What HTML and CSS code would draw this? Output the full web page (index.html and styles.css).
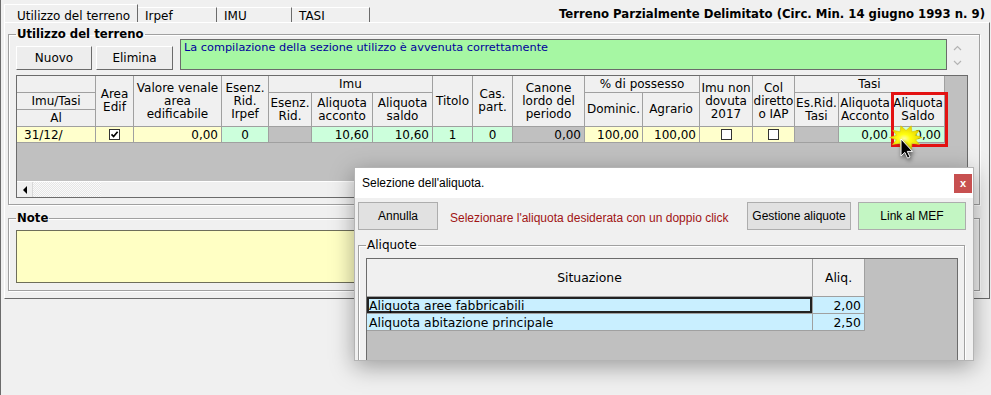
FILE: index.html
```html
<!DOCTYPE html>
<html lang="it">
<head>
    <meta charset="UTF-8">
    <meta name="viewport" content="width=device-width, initial-scale=1.0">
    <title>Terreno Parzialmente Delimitato</title>
    <link rel="stylesheet" href="styles.css">
</head>
<body>

    <div class="app">
        <!-- Tabs + title -->
        <div class="topbar">
            <div class="tabs">
                <div class="tab active">Utilizzo del terreno</div>
                <div class="tab tab-irpef">Irpef</div>
                <div class="tab tab-imu">IMU</div>
                <div class="tab tab-tasi">TASI</div>
            </div>
            <div class="page-title">Terreno Parzialmente Delimitato (Circ. Min. 14 giugno 1993 n. 9)</div>
        </div>

        <div class="panel">
            <fieldset class="group group-usage">
                <legend>Utilizzo del terreno</legend>
                <div class="toolbar">
                    <button type="button" class="btn btn-new">Nuovo</button>
                    <button type="button" class="btn btn-del">Elimina</button>
                    <div class="message">La compilazione della sezione utilizzo è avvenuta correttamente</div>
                    <div class="msg-scroll">
                        <svg width="9" height="6" viewBox="0 0 9 6"><path d="M1 5 L4.5 1.5 L8 5" fill="none" stroke="#b4b4b4" stroke-width="1.2"/></svg>
                        <svg width="9" height="6" viewBox="0 0 9 6"><path d="M1 1 L4.5 4.5 L8 1" fill="none" stroke="#b4b4b4" stroke-width="1.2"/></svg>
                    </div>
                </div>

                <!-- Grid -->
                <div class="grid-wrap">
                    <div class="grid-body">
                        <div class="grid">
                            <div class="h"></div>
                            <div class="h r3">Area<br>Edif</div>
                            <div class="h r3">Valore venale<br>area<br>edificabile</div>
                            <div class="h r3">Esenz.<br>Rid.<br>Irpef</div>
                            <div class="h c3">Imu</div>
                            <div class="h r3">Titolo</div>
                            <div class="h r3">Cas.<br>part.</div>
                            <div class="h r3">Canone<br>lordo del<br>periodo</div>
                            <div class="h c2">% di possesso</div>
                            <div class="h r3">Imu non<br>dovuta<br>2017</div>
                            <div class="h r3">Col<br>diretto<br>o IAP</div>
                            <div class="h c3">Tasi</div>

                            <div class="h">Imu/Tasi</div>
                            <div class="h r2">Esenz.<br>Rid.</div>
                            <div class="h r2">Aliquota<br>acconto</div>
                            <div class="h r2">Aliquota<br>saldo</div>
                            <div class="h r2">Dominic.</div>
                            <div class="h r2">Agrario</div>
                            <div class="h r2">Es.Rid.<br>Tasi</div>
                            <div class="h r2">Aliquota<br>Acconto</div>
                            <div class="h r2">Aliquota<br>Saldo</div>

                            <div class="h">Al</div>

                            <div class="d y txt">31/12/</div>
                            <div class="d y ctr"><span class="chk"><svg width="9" height="9" viewBox="0 0 9 9"><path d="M1.5 4.3 L3.6 6.5 L7.6 1.8" fill="none" stroke="#000" stroke-width="1.7"/></svg></span></div>
                            <div class="d y num">0,00</div>
                            <div class="d g ctr">0</div>
                            <div class="d k"></div>
                            <div class="d g num">10,60</div>
                            <div class="d g num">10,60</div>
                            <div class="d g ctr">1</div>
                            <div class="d g ctr">0</div>
                            <div class="d k num">0,00</div>
                            <div class="d y num">100,00</div>
                            <div class="d y num">100,00</div>
                            <div class="d y ctr"><span class="chk"></span></div>
                            <div class="d y ctr"><span class="chk"></span></div>
                            <div class="d k"></div>
                            <div class="d g num">0,00</div>
                            <div class="d g num">0,00</div>
                        </div>
                    </div>
                    <div class="hscroll">
                        <div class="hs-arrow"><span class="tri-left"></span></div>
                        <div class="hs-thumb"></div>
                    </div>
                </div>
            </fieldset>

            <fieldset class="group group-note">
                <legend>Note</legend>
                <div class="note-box"></div>
            </fieldset>
        </div>
    </div>

    <!-- Highlight + pointer -->
    <div class="highlight"></div>
    <svg class="pointer" width="40" height="40" viewBox="0 0 40 40">
        <defs>
            <radialGradient id="burst" cx="45%" cy="55%" r="55%">
                <stop offset="0" stop-color="#ffffb0"/>
                <stop offset="0.35" stop-color="#ffff10"/>
                <stop offset="1" stop-color="#e4d000"/>
            </radialGradient>
        </defs>
        <polygon fill="url(#burst)" stroke="#d8c400" stroke-width="0.6" points="34,13.5 27.5,15.7 31.5,20.5 23.9,19.2 23.5,25.5 18,20.5 12.5,25.5 12.1,19.2 4.5,20.5 8.5,15.7 1.5,13.5 8.5,11.3 4.8,6.2 12.1,7.8 12.8,1.8 18,6.5 23.2,1.8 23.9,7.8 31.2,6.2 27.5,11.3"/>
        <path class="arrow" d="M13 15 V32 L16.8 28.4 L19.6 34.2 L22 33 L19.3 27.4 H24.5 Z" fill="#000" stroke="#fff" stroke-width="1"/>
    </svg>

    <!-- Dialog -->
    <div class="dialog">
        <div class="dlg-title">
            <span>Selezione dell'aliquota.</span>
            <span class="dlg-close">x</span>
        </div>
        <div class="dlg-body">
            <div class="dlg-actions">
                <button type="button" class="dbtn btn-cancel">Annulla</button>
                <span class="dlg-hint">Selezionare l'aliquota desiderata con un doppio click</span>
                <button type="button" class="dbtn btn-manage">Gestione aliquote</button>
                <button type="button" class="dbtn btn-mef">Link al MEF</button>
            </div>
            <fieldset class="group group-rates">
                <legend>Aliquote</legend>
                <div class="rates-wrap">
                    <div class="rates">
                        <div class="rh">Situazione</div>
                        <div class="rh">Aliq.</div>
                        <div class="rc sel">Aliquota aree fabbricabili</div>
                        <div class="rc num">2,00</div>
                        <div class="rc">Aliquota abitazione principale</div>
                        <div class="rc num">2,50</div>
                    </div>
                </div>
            </fieldset>
        </div>
    </div>

</body>
</html>
```

FILE: styles.css
```css
* {
    box-sizing: border-box;
}
body {
    margin: 0;
    width: 991px;
    height: 395px;
    overflow: hidden;
    position: relative;
    background: #f0f0f0;
    font-family: "DejaVu Sans", Verdana, sans-serif;
    font-size: 12px;
    color: #000;
}
.app {
    height: 395px;
    border-left: 1px solid #6b6b6b;
}

/* Top bar */
.topbar {
    height: 22px;
    display: flex;
    align-items: flex-end;
    justify-content: space-between;
    padding: 0 6px 0 3px;
}
.tabs {
    display: flex;
    align-items: flex-end;
}
.tab {
    height: 15px;
    padding: 2px 0 0 7px;
    line-height: 13px;
    border-right: 1px solid #6b6b6b;
    border-top: 1px solid #fff;
    white-space: nowrap;
}
.tab.active {
    width: 134px;
    height: 18px;
    padding: 5px 0 0 12px;
    border-left: 1px solid #fff;
}
.tab-irpef { width: 79px; }
.tab-imu { width: 75px; }
.tab-tasi { width: 78px; }
.page-title {
    font-weight: bold;
    font-size: 11.7px;
    line-height: 13px;
    margin-bottom: 1px;
    white-space: nowrap;
}

/* Main panel */
.panel {
    margin-left: 3px;
    width: 986px;
    height: 277px;
    padding: 6px 9px 7px 3px;
    border: 1px solid #fff;
    border-right-color: #6b6b6b;
    border-bottom-color: #6b6b6b;
}
.group {
    margin: 0;
    min-width: 0;
    border: 1px solid #a0a0a0;
    box-shadow: 1px 1px 0 #fff, inset 1px 1px 0 #fff;
}
.group legend {
    padding: 0 1px;
    line-height: 10px;
    font-weight: bold;
    font-size: 11.7px;
}
.group-usage {
    padding: 0 11px 6px 7px;
}
.group-note {
    margin-top: 8px;
    padding: 7px 11px 7px 7px;
}
.note-box {
    height: 53px;
    background: #ffffc4;
    border: 1px solid #6e6e5a;
}

/* Toolbar */
.toolbar {
    display: flex;
    align-items: flex-end;
    height: 31px;
}
.btn {
    font: inherit;
    height: 24px;
    padding: 0;
    background: #ededed;
    border: 1px solid;
    border-color: #fff #6b6b6b #6b6b6b #fff;
    color: #000;
}
.btn-new { width: 76px; }
.btn-del { width: 77px; margin-left: 4px; }
.message {
    width: 767px;
    height: 31px;
    margin-left: 7px;
    padding: 1px 3px;
    font-size: 11.3px;
    line-height: 13px;
    background: #a6f7a3;
    border: 1px solid #6b6b6b;
    color: #00009c;
}
.msg-scroll {
    width: 21px;
    height: 31px;
    display: flex;
    flex-direction: column;
    align-items: center;
    gap: 9px;
    padding-top: 6px;
}
.msg-scroll svg {
    display: block;
}

/* Grid */
.grid-wrap {
    margin-top: 5px;
    height: 123px;
    display: flex;
    flex-direction: column;
    border: 1px solid #6b6b6b;
}
.grid-body {
    flex: 1;
    background: #c0c0c0;
}
.grid {
    display: grid;
    width: max-content;
    grid-template-columns: 79px 38px 88px 47px 43px 61px 60px 40px 40px 72px 58px 57px 53px 42px 44px 53px 53px;
    grid-template-rows: 17px 17px 17px 16px;
}
.grid > div {
    border-right: 1px solid #a0a0a0;
    border-bottom: 1px solid #a0a0a0;
    white-space: nowrap;
    overflow: hidden;
}
.h {
    display: flex;
    align-items: center;
    justify-content: center;
    text-align: center;
    line-height: 13px;
    background: #f0f0f0;
}
.r2 { grid-row: span 2; }
.r3 { grid-row: span 3; }
.c2 { grid-column: span 2; }
.c3 { grid-column: span 3; }
.d {
    display: flex;
    align-items: center;
    line-height: 14px;
}
.d.y { background: #ffffcc; }
.d.g { background: #ccffdc; }
.d.k { background: #c0c0c0; }
.d.txt { padding-left: 7px; }
.d.num { justify-content: flex-end; padding-right: 3px; }
.d.ctr { justify-content: center; }
.chk {
    width: 11px;
    height: 11px;
    display: flex;
    align-items: center;
    justify-content: center;
    background: #fff;
    border: 1px solid #333;
}
.hscroll {
    height: 16px;
    display: flex;
    background: #f0f0f0;
    border-top: 1px solid #fff;
}
.hs-arrow {
    width: 16px;
    display: flex;
    align-items: center;
    justify-content: center;
    border-right: 1px solid #d8d8d8;
}
.tri-left {
    width: 0;
    height: 0;
    border-top: 4px solid transparent;
    border-bottom: 4px solid transparent;
    border-right: 4px solid #000;
}
.hs-thumb {
    width: 68px;
    background: repeating-conic-gradient(#fafafa 0 25%, #e6e6e6 0 50%) 0 0 / 2px 2px;
}

/* Overlays */
.highlight {
    position: absolute;
    left: 891px;
    top: 92px;
    width: 57px;
    height: 55px;
    border: 3px solid #e31212;
}
.pointer {
    position: absolute;
    left: 888px;
    top: 124px;
    overflow: visible;
}
.pointer .arrow {
    filter: drop-shadow(1px 2px 2px rgba(0, 0, 0, 0.6));
}

/* Dialog */
.dialog {
    position: absolute;
    left: 354px;
    top: 167px;
    width: 620px;
    height: 194px;
    overflow: hidden;
    display: flex;
    flex-direction: column;
    background: #f0f0f0;
    border: 1px solid #b4b4b4;
    box-shadow: 0 6px 22px rgba(0, 0, 0, 0.35);
    font-family: "Liberation Sans", Arial, sans-serif;
    font-size: 12px;
}
.dlg-title {
    height: 30px;
    flex: none;
    display: flex;
    align-items: center;
    justify-content: space-between;
    padding: 0 1px 0 7px;
    background: #fff;
}
.dlg-close {
    width: 18px;
    height: 19px;
    display: flex;
    align-items: center;
    justify-content: center;
    background: #c75050;
    color: #fff;
    font-size: 11px;
    font-weight: bold;
}
.dlg-body {
    padding: 4px 4px 0 3px;
}
.dlg-actions {
    display: flex;
    align-items: center;
    padding-right: 3px;
}
.dbtn {
    font: inherit;
    height: 28px;
    padding: 0;
    background: #e1e1e1;
    border: 1px solid #adadad;
    color: #000;
}
.btn-cancel { width: 80px; }
.btn-manage { width: 104px; }
.btn-mef { width: 108px; margin-left: 7px; background: #c3f6c3; }
.dlg-hint {
    flex: 1;
    padding-left: 12px;
    padding-top: 3px;
    color: #a01414;
}
.group-rates {
    margin: 10px 4px 0 0;
    padding: 8px 6px 0 7px;
    font-family: "DejaVu Sans", Verdana, sans-serif;
}
.group-rates legend {
    font-weight: normal;
    font-size: 12px;
}
.rates-wrap {
    height: 120px;
    background: #c0c0c0;
    border: 1px solid #6b6b6b;
}
.rates {
    display: grid;
    width: max-content;
    grid-template-columns: 446px 52px;
    grid-template-rows: 38px 17px 17px;
    font-size: 12.4px;
}
.rates > div {
    border-right: 1px solid #a0a0a0;
    border-bottom: 1px solid #a0a0a0;
    white-space: nowrap;
}
.rh {
    display: flex;
    align-items: center;
    justify-content: center;
    background: #f0f0f0;
}
.rc {
    display: flex;
    align-items: center;
    padding-left: 2px;
    background: #c9efff;
}
.rc.num {
    justify-content: flex-end;
    padding-right: 3px;
}
.rc.sel {
    box-shadow: inset 0 0 0 2px #222;
}
```
